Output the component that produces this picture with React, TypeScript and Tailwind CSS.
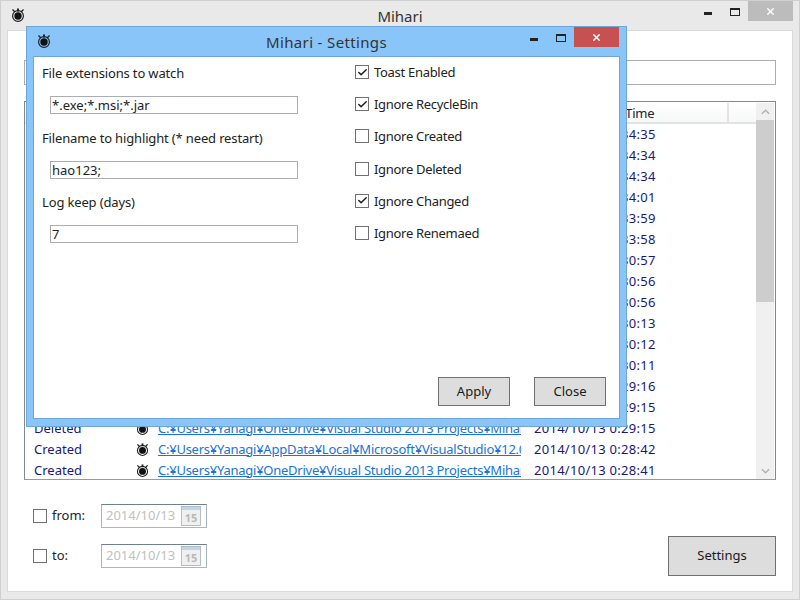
import { Check, X } from "lucide-react";

const font = { fontFamily: '"Noto Sans", "Noto Sans CJK JP", sans-serif' };

const rows = [
  { kind: "Changed", path: "C:¥Users¥Yanagi¥OneDrive¥Visual Studio 2013 Projects¥Mihari", time: "2014/10/13 0:34:35" },
  { kind: "Changed", path: "C:¥Users¥Yanagi¥OneDrive¥Visual Studio 2013 Projects¥Mihari", time: "2014/10/13 0:34:34" },
  { kind: "Changed", path: "C:¥Users¥Yanagi¥OneDrive¥Visual Studio 2013 Projects¥Mihari", time: "2014/10/13 0:34:34" },
  { kind: "Created", path: "C:¥Users¥Yanagi¥OneDrive¥Visual Studio 2013 Projects¥Mihari", time: "2014/10/13 0:34:01" },
  { kind: "Created", path: "C:¥Users¥Yanagi¥OneDrive¥Visual Studio 2013 Projects¥Mihari", time: "2014/10/13 0:33:59" },
  { kind: "Deleted", path: "C:¥Users¥Yanagi¥OneDrive¥Visual Studio 2013 Projects¥Mihari", time: "2014/10/13 0:33:58" },
  { kind: "Created", path: "C:¥Users¥Yanagi¥OneDrive¥Visual Studio 2013 Projects¥Mihari", time: "2014/10/13 0:30:57" },
  { kind: "Created", path: "C:¥Users¥Yanagi¥OneDrive¥Visual Studio 2013 Projects¥Mihari", time: "2014/10/13 0:30:56" },
  { kind: "Deleted", path: "C:¥Users¥Yanagi¥OneDrive¥Visual Studio 2013 Projects¥Mihari", time: "2014/10/13 0:30:56" },
  { kind: "Created", path: "C:¥Users¥Yanagi¥OneDrive¥Visual Studio 2013 Projects¥Mihari", time: "2014/10/13 0:30:13" },
  { kind: "Created", path: "C:¥Users¥Yanagi¥OneDrive¥Visual Studio 2013 Projects¥Mihari", time: "2014/10/13 0:30:12" },
  { kind: "Deleted", path: "C:¥Users¥Yanagi¥OneDrive¥Visual Studio 2013 Projects¥Mihari", time: "2014/10/13 0:30:11" },
  { kind: "Created", path: "C:¥Users¥Yanagi¥OneDrive¥Visual Studio 2013 Projects¥Mihari", time: "2014/10/13 0:29:16" },
  { kind: "Created", path: "C:¥Users¥Yanagi¥OneDrive¥Visual Studio 2013 Projects¥Mihari", time: "2014/10/13 0:29:15" },
  { kind: "Deleted", path: "C:¥Users¥Yanagi¥OneDrive¥Visual Studio 2013 Projects¥Mihari", time: "2014/10/13 0:29:15" },
  { kind: "Created", path: "C:¥Users¥Yanagi¥AppData¥Local¥Microsoft¥VisualStudio¥12.0¥Designer", time: "2014/10/13 0:28:42" },
  { kind: "Created", path: "C:¥Users¥Yanagi¥OneDrive¥Visual Studio 2013 Projects¥Mihari", time: "2014/10/13 0:28:41" },
];

const options = [
  { label: "Toast Enabled", checked: true },
  { label: "Ignore RecycleBin", checked: true },
  { label: "Ignore Created", checked: false },
  { label: "Ignore Deleted", checked: false },
  { label: "Ignore Changed", checked: true },
  { label: "Ignore Renemaed", checked: false },
];

function AppIcon({ className }: { className: string }) {
  return (
    <svg viewBox="0 0 14 14" className={className}>
      <path d="M1.5 1.5 L4 4 M12.5 1.5 L10 4" stroke="#222" strokeWidth="1.4" />
      <rect x="6" y="0.5" width="2" height="3" fill="#222" />
      <circle cx="7" cy="8" r="5.4" fill="none" stroke="#222" strokeWidth="1.2" />
      <circle cx="7" cy="8" r="3.7" fill="#111" />
    </svg>
  );
}

function CaptionButtons({ closeClass }: { closeClass: string }) {
  return (
    <div className="flex items-start">
      <div className="w-[26px] h-[20px] flex justify-center">
        <div className="w-[8px] h-[3px] mt-[11px] mr-[2px] bg-[#222]" />
      </div>
      <div className="w-[26px] h-[20px] flex justify-center">
        <div className="w-[10px] h-[8px] mt-[7px] border border-t-[2px] border-[#222]" />
      </div>
      <div className={`w-[45px] h-[20px] flex items-center justify-center ${closeClass}`}>
        <X size={11} strokeWidth={3} color="#fff" />
      </div>
    </div>
  );
}

function CheckBox({ checked }: { checked: boolean }) {
  return (
    <div className="w-[14px] h-[14px] shrink-0 border border-[#707070] bg-white flex items-center justify-center">
      {checked && <Check size={11} strokeWidth={3.4} color="#222" />}
    </div>
  );
}

function WpfButton({ label, className }: { label: string; className: string }) {
  return (
    <div className={`flex items-center justify-center bg-[#dddddd] border border-[#707070] text-[#1a1a1a] ${className}`}>
      {label}
    </div>
  );
}

function DateField({ label }: { label: string }) {
  return (
    <div className="flex items-center h-[24px]">
      <CheckBox checked={false} />
      <span className="ml-[5px] w-[49px] text-[#222]">{label}</span>
      <div className="w-[106px] h-[24px] flex items-center pl-[4px] border border-[#abb5c0] border-t-[#6d7f90] bg-white">
        <span className="w-[75px] text-[#c0c0c0]">2014/10/13</span>
        <div className="w-[20px] h-[20px] border border-[#b4bcc4] bg-[#f0f0f0] flex flex-col">
          <div className="h-[5px] bg-[#bcd6ee]" />
          <div className="flex-1 text-[11px] leading-[15px] font-bold text-center text-[#b8b8b8]">15</div>
        </div>
      </div>
    </div>
  );
}

function SettingsWindow() {
  const fields = [
    { label: "File extensions to watch", value: "*.exe;*.msi;*.jar" },
    { label: "Filename to highlight (* need restart)", value: "hao123;" },
    { label: "Log keep (days)", value: "7" },
  ];

  return (
    <div className="absolute left-[25px] top-[25px] w-[601px] h-[401px] bg-[#8ac5fa] border border-[#6ea6d8] flex flex-col">
      <div className="relative h-[29px] shrink-0 flex justify-between pl-[10px] pr-[7px]">
        <AppIcon className="w-[14px] h-[14px] mt-[7px]" />
        <span className="absolute left-0 right-0 top-[5px] text-center text-[15px] leading-[21px] tracking-[0.35px] text-[#333]">
          Mihari - Settings
        </span>
        <div className="relative">
          <CaptionButtons closeClass="bg-[#c75050]" />
        </div>
      </div>
      <div className="relative flex-1 mx-[6px] mb-[7px] bg-white border border-[#6ea6d8] flex">
        <div className="w-[321px] pl-[8px]">
          {fields.map((field) => (
            <div key={field.label} className="h-[64.5px] pt-[6px]">
              <div className="h-[20px] leading-[20px] text-[#222] whitespace-nowrap tracking-[-0.15px]">{field.label}</div>
              <div className="ml-[8px] mt-[13px] w-[248px] h-[18px] border border-[#abadb3] pl-[1px] leading-[16px] text-[#222]">
                {field.value}
              </div>
            </div>
          ))}
        </div>
        <div className="pt-[8px]">
          {options.map((option) => (
            <div key={option.label} className="h-[32.2px] flex items-start gap-[5px]">
              <CheckBox checked={option.checked} />
              <span className="leading-[14px] text-[#222] tracking-[-0.3px]">{option.label}</span>
            </div>
          ))}
        </div>
        <div className="absolute right-[13px] bottom-[12px] flex gap-[24px]">
          <WpfButton label="Apply" className="w-[72px] h-[29px]" />
          <WpfButton label="Close" className="w-[72px] h-[29px]" />
        </div>
      </div>
    </div>
  );
}

export default function App() {
  return (
    <div style={font} className="relative w-[800px] h-[600px] overflow-hidden text-[13px] bg-[#e9e9e9] border border-[#cfcfcf] flex flex-col">
      <div className="relative h-[29px] shrink-0 flex justify-between pl-[10px] pr-[6px]">
        <AppIcon className="w-[14px] h-[14px] mt-[7px]" />
        <span className="absolute left-0 right-0 top-[5px] text-center text-[15px] leading-[21px] text-[#333]">Mihari</span>
        <div className="relative">
          <CaptionButtons closeClass="bg-[#bcbcbc]" />
        </div>
      </div>

      <div className="flex-1 mx-[6px] mb-[7px] bg-white border border-[#d9d9d9] px-[16px] flex flex-col">
        <div className="mt-[29px] h-[25px] shrink-0 border border-[#abadb3]" />
        <div className="mt-[16px] h-[379px] shrink-0 border border-[#828790] border-b-[#9a9a9a] flex overflow-hidden">
          <div className="flex-1 min-w-0 flex flex-col pl-[9px]">
            <div className="-ml-[9px] h-[22px] shrink-0 flex pt-px border-b-2 border-[#e3e3e3] bg-gradient-to-b from-white to-[#f7f8f9]">
              <div className="w-[500px] shrink-0" />
              <div className="w-[204px] shrink-0 text-center border-r-2 border-[#e3e3e3] leading-[20px] tracking-[-0.3px] text-[#222]">DateTime</div>
            </div>
            {rows.map((row) => (
              <div key={row.time + row.kind} className="h-[21px] shrink-0 flex items-center text-[#18187a]">
                <span className="w-[102px] shrink-0">{row.kind}</span>
                <AppIcon className="w-[13px] h-[13px] mr-[9px] shrink-0" />
                <a className="w-[363px] shrink-0 overflow-hidden whitespace-nowrap underline tracking-[-0.25px] text-[#1a73d8]">{row.path}</a>
                <span className="ml-[13px] whitespace-nowrap tracking-[0.28px]">{row.time}</span>
              </div>
            ))}
          </div>
          <div className="w-[18px] shrink-0 mt-px mr-px bg-[#f0f0f0] flex flex-col">
            <div className="h-[17px] shrink-0 flex items-center justify-center">
              <svg viewBox="0 0 10 6" className="w-[9px] h-[6px]"><path d="M1 5 L5 1 L9 5" fill="none" stroke="#b0b0b0" strokeWidth="1.5" /></svg>
            </div>
            <div className="h-[182px] shrink-0 bg-[#cdcdcd]" />
            <div className="flex-1" />
            <div className="h-[17px] shrink-0 flex items-center justify-center">
              <svg viewBox="0 0 10 6" className="w-[9px] h-[6px]"><path d="M1 1 L5 5 L9 1" fill="none" stroke="#b0b0b0" strokeWidth="1.5" /></svg>
            </div>
          </div>
        </div>

        <div className="flex-1 flex justify-between">
          <div className="pl-[9px] pt-[24px] flex flex-col gap-[16px]">
            <DateField label="from:" />
            <DateField label="to:" />
          </div>
          <WpfButton label="Settings" className="w-[108px] h-[40px] mt-[56px]" />
        </div>
      </div>

      <SettingsWindow />
    </div>
  );
}
